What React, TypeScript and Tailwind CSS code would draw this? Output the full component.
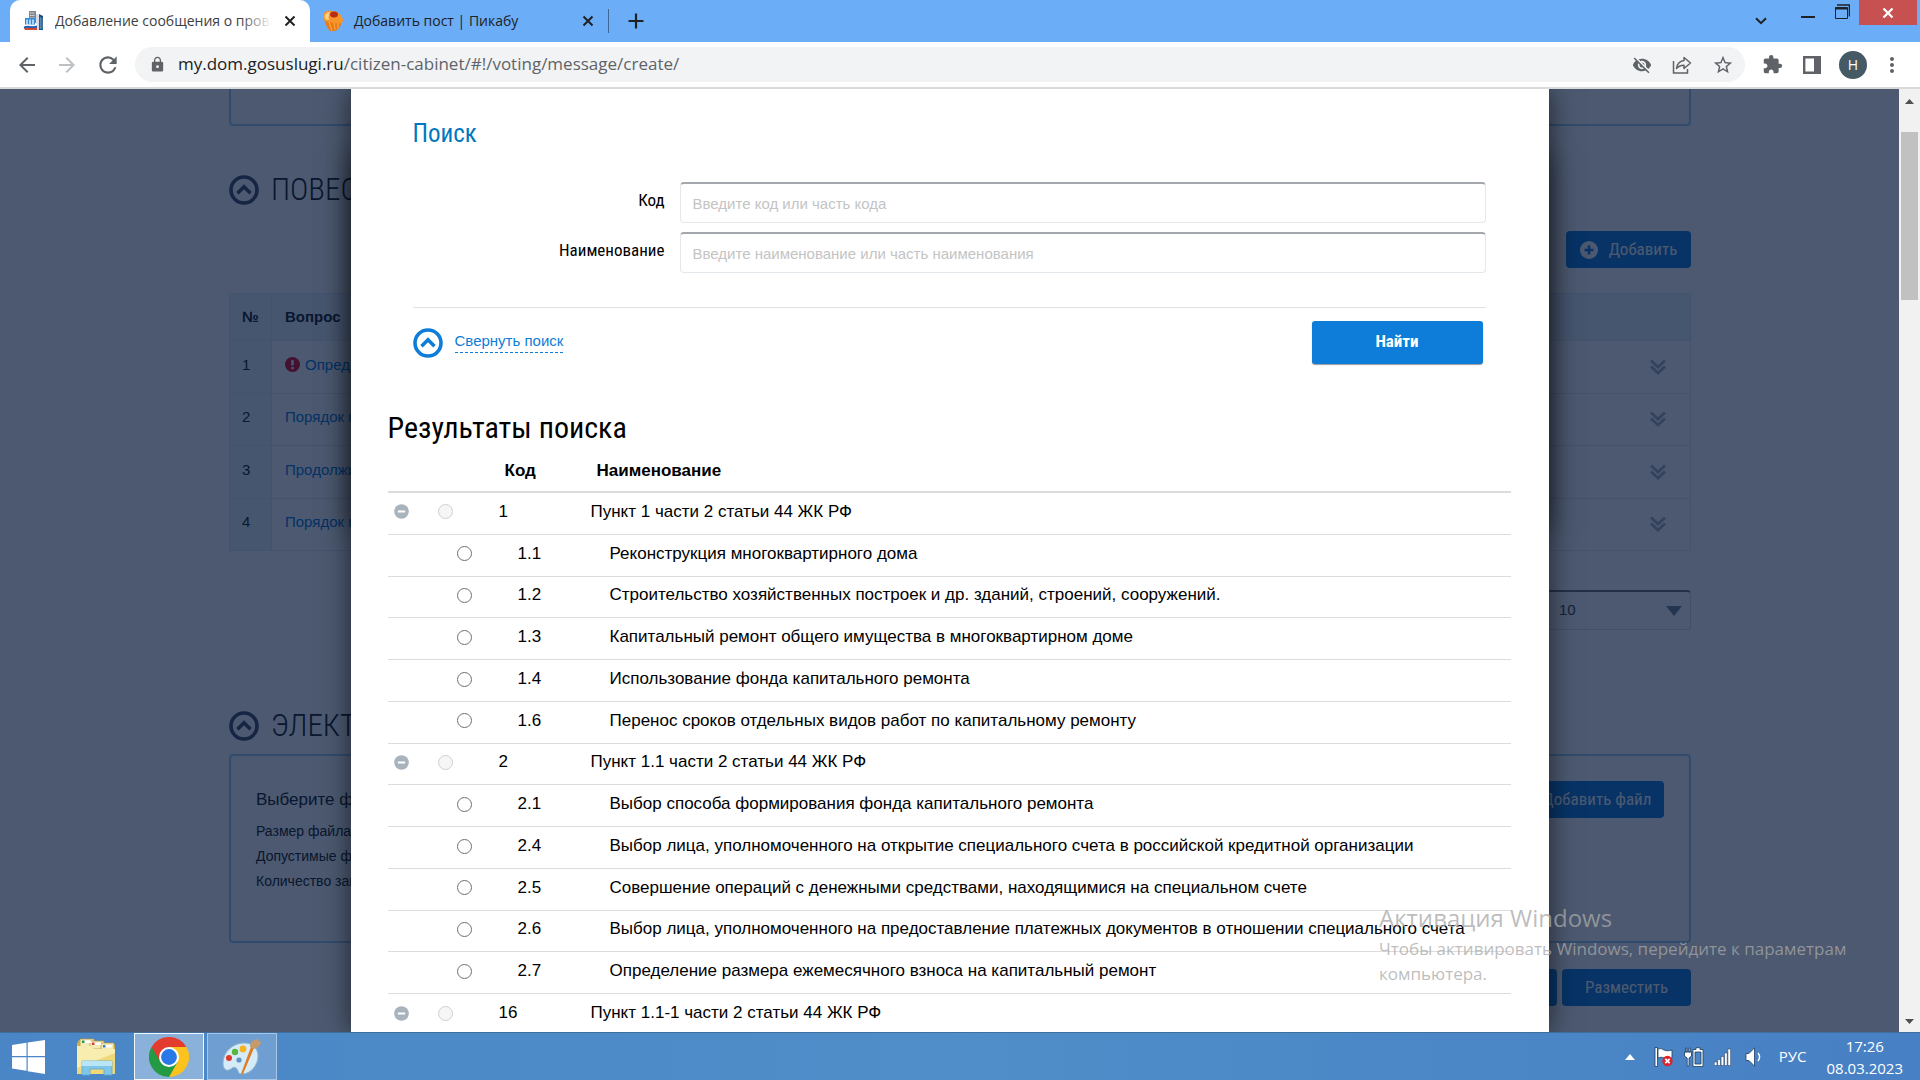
import React from 'react';
import {
  MdArrowBack,
  MdArrowForward,
  MdExtension,
  MdLock,
  MdMoreVert,
  MdRefresh,
  MdStarBorder,
  MdVisibilityOff,
} from 'react-icons/md';

interface ResultRow {
  code: string;
  name: string;
  group?: boolean;
}

const results: ResultRow[] = [
  { code: '1', name: 'Пункт 1 части 2 статьи 44 ЖК РФ', group: true },
  { code: '1.1', name: 'Реконструкция многоквартирного дома' },
  { code: '1.2', name: 'Строительство хозяйственных построек и др. зданий, строений, сооружений.' },
  { code: '1.3', name: 'Капитальный ремонт общего имущества в многоквартирном доме' },
  { code: '1.4', name: 'Использование фонда капитального ремонта' },
  { code: '1.6', name: 'Перенос сроков отдельных видов работ по капитальному ремонту' },
  { code: '2', name: 'Пункт 1.1 части 2 статьи 44 ЖК РФ', group: true },
  { code: '2.1', name: 'Выбор способа формирования фонда капитального ремонта' },
  { code: '2.4', name: 'Выбор лица, уполномоченного на открытие специального счета в российской кредитной организации' },
  { code: '2.5', name: 'Совершение операций с денежными средствами, находящимися на специальном счете' },
  { code: '2.6', name: 'Выбор лица, уполномоченного на предоставление платежных документов в отношении специального счета' },
  { code: '2.7', name: 'Определение размера ежемесячного взноса на капитальный ремонт' },
  { code: '16', name: 'Пункт 1.1-1 части 2 статьи 44 ЖК РФ', group: true },
];

const questions = [
  { id: 1, title: 'Определение', error: true },
  { id: 2, title: 'Порядок приема' },
  { id: 3, title: 'Продолжительность' },
  { id: 4, title: 'Порядок приема' },
];

const condensed = "font-['Roboto_Condensed','Liberation_Sans_Narrow',Roboto,sans-serif]";

/* ---------- Icons ---------- */

const CircleUp: React.FC<{ className?: string }> = ({ className }) => (
  <svg viewBox="0 0 30 30" className={`size-[30px] shrink-0 ${className ?? ''}`} fill="none" stroke="currentColor">
    <circle cx="15" cy="15" r="13" strokeWidth="3.6" />
    <path d="M8.5 18.2 15 11.8l6.500 6.400" strokeWidth="3.600" />
  </svg>
);

const CloseIcon = () => (
  <svg viewBox="0 0 12 12" className="size-3" stroke="currentColor" strokeWidth="2">
    <path d="M1.500 1.500l9 9M10.500 1.500l-9 9" />
  </svg>
);

const DoubleDown = () => (
  <svg viewBox="0 0 16 16" className="inline size-4" fill="none" stroke="currentColor" strokeWidth="2.800">
    <path d="M1 1.500l7 6.500 7-6.500M1 7.500l7 6.500 7-6.500" />
  </svg>
);

const MinusCircle = () => (
  <svg viewBox="0 0 15 15" className="block size-[15px]">
    <circle cx="7.500" cy="7.500" r="7.300" fill="#a9b3bc" />
    <rect x="3.800" y="6.500" width="7.400" height="2" rx=".5" fill="#fff" />
  </svg>
);

const PlusCircle = () => (
  <svg viewBox="0 0 18 18" className="size-[18px] shrink-0">
    <circle cx="9" cy="9" r="9" fill="#fff" />
    <path d="M9 4.500v9M4.500 9h9" stroke="#1a80dc" strokeWidth="2.600" />
  </svg>
);

const HouseFavicon = () => (
  <svg viewBox="0 0 20 20" className="size-5 shrink-0">
    <path d="M5 0h7v12H5z" fill="#7f858c" />
    <path d="M6 2h5M6 4.500h5M6 7h5" stroke="#e8eaec" strokeWidth="1.200" strokeDasharray="1.500 .8" />
    <path d="M12 3l4 1v15h-4z" fill="#d7dde3" />
    <path d="M15 3l4 2v14h-4z" fill="#1c4f80" />
    <path d="M16.300 6v12M18 7v11" stroke="#9fc3e4" strokeWidth=".6" />
    <path d="M1 7h10v9H1z" fill="#2f8ad8" />
    <path d="M3 8.500v5M6 8.500v5M9 8.500v5" stroke="#e4f0fa" strokeWidth="1.400" />
    <path d="M0 14c4-2 8 1 13-1v3c-5 2-9-1-13 1z" fill="#fff" />
    <path d="M0 17c4-3 8 0 13-2v4H1z" fill="#d8482c" />
    <path d="M0 15.500c4-2 8 1 13-1v2c-5 2-9-1-13 1z" fill="#1f5fc0" />
  </svg>
);

const PieFavicon = () => (
  <svg viewBox="0 0 22 22" className="size-[22px] shrink-0">
    <path d="M2 8c1 5 3 10 6 13 4 1 8-1 10-4 1-3 2-6 2-9z" fill="#e97a17" />
    <path d="M7 12l3 9M12 12l1 8M16 11l0 8" stroke="#f9a23a" strokeWidth="1.300" />
    <path d="M1 6c0-4 4-6 9-5 6 0 10 4 11 9 0 3-2 4-5 3-3 1-6 0-8-1C4 13 1 10 1 6z" fill="#f7952a" />
    <path d="M3 5c1-2 3-3 5-3-1 3-2 5-1 8-3 0-5-2-4-5z" fill="#ffd08a" />
    <ellipse cx="12" cy="4.500" rx="4" ry="3" fill="#b92c14" />
  </svg>
);

const ShareIcon = () => (
  <svg viewBox="0 0 20 20" className="size-5" fill="none" stroke="currentColor" strokeWidth="1.500">
    <path d="M1.500 6v12h14v-4" />
    <path d="M12 2.500l6.500 5.500-6.500 5.500v-3.200c-3.500 0-5.500 1-7.500 3.200.5-4 3-7.300 7.500-8z" strokeLinejoin="round" />
  </svg>
);

const ExplorerIcon = () => (
  <svg viewBox="0 0 42 38" className="h-[38px] w-[42px]">
    <path d="M3 2h15l2 3h15l4 2v28H1V6z" fill="#d9b64d" />
    <path d="M4 1h14v8H4z" fill="#f5e9b4" stroke="#b9943a" strokeWidth=".7" />
    <path d="M14 3h14v8H14z" fill="#f5e9b4" stroke="#b9943a" strokeWidth=".7" />
    <path d="M25 5h13v8H25z" fill="#f5e9b4" stroke="#b9943a" strokeWidth=".7" />
    <path d="M6 2.500h9v2.500H6zM16 4.500h9v2.500h-9zM27 7h9v2.500h-9z" fill="#fff" />
    <path d="M6 2.500h2.500v2.500H6z" fill="#2f9c48" />
    <path d="M16 4.500h2.500v2.500H16z" fill="#d6452e" />
    <path d="M27 7h2.500v2.500H27z" fill="#2c86d6" />
    <path d="M1 8h14l3 3h21v25H1z" fill="#f0d878" />
    <path d="M1 8h14l3 3h21v4L1 30z" fill="#f9ecaf" />
    <path d="M6 23h30v14h-8v-6H14v6H6z" fill="#7fc6e8" stroke="#5ba9cf" strokeWidth=".8" />
    <path d="M6 23h30v5H6z" fill="#b9e6f6" />
  </svg>
);

const ChromeLogo = () => (
  <svg viewBox="0 0 48 48" className="size-10">
    <path d="M24 24 3.200 12A24 24 0 0 1 44.800 12z" fill="#e33b2e" />
    <path d="M24 24V12h20.800A24 24 0 0 1 24 48z" fill="#fcc31e" />
    <path d="M24 24l10.400 6L24 48A24 24 0 0 1 3.200 12z" fill="#249a44" />
    <path d="M24 12h20.800L34.400 30z" fill="#fcc31e" />
    <path d="M3.200 12 13.600 30 24 12z" fill="#e33b2e" />
    <path d="M3.200 12 13.600 30 24 36 20 46z" fill="#249a44" />
    <circle cx="24" cy="24" r="12" fill="#fff" />
    <circle cx="24" cy="24" r="9.500" fill="#2878e8" />
  </svg>
);

const PaintIcon = () => (
  <svg viewBox="0 0 40 38" className="h-[38px] w-10">
    <path
      d="M22 5C11 5 1 14 1 25c0 6 3 8 6 7s4-4 7-2 1 6 6 6c9 0 16-9 16-18 0-8-6-13-14-13z"
      fill="#d5ebf7"
      stroke="#8bb6d2"
    />
    <circle cx="17" cy="22" r="2.600" fill="#5f93c4" />
    <circle cx="7" cy="20" r="3" fill="#e0392b" />
    <circle cx="13" cy="14" r="3.200" fill="#55b83a" />
    <circle cx="21" cy="11" r="3.400" fill="#f7b21c" />
    <path d="M32 10 21 36l-2 1 .5-2.500L29 9z" fill="#e07b22" />
    <path d="M28 9c0-4 3-8 8-8 0 3 4 2 3 4-2 4-5 6-8 6z" fill="#c69a6b" />
  </svg>
);

/* ---------- Browser chrome ---------- */

const TabStrip = () => (
  <div className="flex h-[42px] shrink-0 items-stretch bg-[#6badf6] text-[#202124]">
    <div className="ml-[10px] flex w-[300px] items-center rounded-t-[10px] bg-white px-[14px]">
      <HouseFavicon />
      <button className="relative ml-[11px] flex-1 overflow-hidden pb-[2px] text-left text-[14px] whitespace-nowrap text-[#3c4043]">
        Добавление сообщения о проведении
        <span className="absolute inset-y-0 right-0 w-8 bg-linear-to-r from-white/0 to-white" />
      </button>
      <button aria-label="Закрыть вкладку" className="ml-[12px]"><CloseIcon /></button>
    </div>
    <div className="flex w-[298px] items-center pl-[12px] pr-[14px]">
      <PieFavicon />
      <button className="ml-[10px] flex-1 pb-[2px] text-left text-[14px] whitespace-nowrap">Добавить пост | Пикабу</button>
      <button aria-label="Закрыть вкладку"><CloseIcon /></button>
    </div>
    <div className="my-[9px] w-px bg-[#3d6796]" />
    <button aria-label="Новая вкладка" className="ml-[19px]">
      <svg viewBox="0 0 16 16" className="size-4" stroke="currentColor" strokeWidth="2.200">
        <path d="M8 .5v15M.5 8h15" />
      </svg>
    </button>
    {/* Window controls */}
    <div className="ml-auto flex items-start pr-[3px]">
      <button aria-label="Поиск вкладок" className="mt-[17px] mr-[34px]">
        <svg viewBox="0 0 12 8" className="h-2 w-3" fill="none" stroke="currentColor" strokeWidth="2">
          <path d="M1 1.200l5 5 5-5" />
        </svg>
      </button>
      <button aria-label="Свернуть" className="mt-4 mr-5 h-[2px] w-[14px] bg-[#202124]" />
      <button aria-label="Восстановить" className="mt-1 mr-[9px]">
        <svg viewBox="0 0 15 15" className="size-[15px]" fill="none" stroke="currentColor">
          <path d="M.5 3.500h12v11H.5z" />
          <path d="M.5 4.500h12" strokeWidth="2" />
          <path d="M2 1h12.500v11.500" strokeWidth="1.600" />
        </svg>
      </button>
      <button aria-label="Закрыть" className="flex h-[25px] w-[58px] items-center justify-center bg-[#c75050] text-white">
        <svg viewBox="0 0 12 10" className="h-[10px] w-3" stroke="currentColor" strokeWidth="2.200">
          <path d="M1.500.5l9 9M10.500.5l-9 9" />
        </svg>
      </button>
    </div>
  </div>
);

const Toolbar = () => (
  <div className="flex h-[47px] shrink-0 items-center border-b-2 border-[#d9dadb] bg-white pl-[15px] pr-5 text-[#5f6368]">
    <button aria-label="Назад"><MdArrowBack size={24} /></button>
    <button aria-label="Вперед" className="ml-4 text-[#bdc1c6]"><MdArrowForward size={24} /></button>
    <button aria-label="Обновить" className="ml-4"><MdRefresh size={26} /></button>
    <div className="ml-[14px] flex h-[35px] flex-1 items-center rounded-full bg-[#f1f3f4] pl-[14px] pr-[11px]">
      <MdLock size={17} />
      <div className="ml-[12px] flex-1 pb-px text-[17px]">
        <span className="text-[#202124]">my.dom.gosuslugi.ru</span>/citizen-cabinet/#!/voting/message/create/
      </div>
      <div className="flex items-center gap-5">
        <MdVisibilityOff size={20} />
        <ShareIcon />
        <MdStarBorder size={22} />
      </div>
    </div>
    <div className="ml-[17px] flex items-center">
      <MdExtension size={21} />
      <svg viewBox="0 0 18 18" className="ml-[20px] size-[18px]">
        <path d="M1.200 1.200h15.600v15.600H1.200z" fill="none" stroke="currentColor" strokeWidth="2.400" />
        <path d="M11 1h6v16h-6z" fill="currentColor" />
      </svg>
      <span className="ml-[18px] flex size-7 items-center justify-center rounded-full bg-[#455a64] text-[14px] text-white">Н</span>
      <MdMoreVert size={24} className="ml-[13px] -mr-[4px]" />
    </div>
  </div>
);

/* ---------- Page under the dialog ---------- */

const pageButton = `flex h-[37px] items-center justify-center rounded-[4px] bg-[#1a80dc] text-[17px] text-white ${condensed}`;

const SectionTitle: React.FC<{ children: React.ReactNode }> = ({ children }) => (
  <h2 className={`flex h-[30px] items-center gap-3 text-[31px] font-light whitespace-nowrap text-[#222] ${condensed}`}>
    <CircleUp className="text-[#46506a]" />
    {children}
  </h2>
);

const CabinetPage = () => (
  <div className="absolute inset-0 overflow-hidden bg-white">
    <div className="mx-auto max-w-[1462px]">
      <div className="h-[37px] rounded-b-[4px] border-2 border-t-0 border-[#a9d0f0]" />

      <div className="mt-[49px]"><SectionTitle>ПОВЕСТКА ДНЯ</SectionTitle></div>
      <div className="mt-[26px] flex justify-end">
        <button className={`${pageButton} w-[125px] gap-[11px]`}><PlusCircle />Добавить</button>
      </div>

      <table className="mt-[25px] h-[258px] w-full border-collapse border border-[#e0ebf5] text-left text-[15px] text-[#222]">
        <thead>
          <tr className="h-[47px] bg-[#eef6fa]">
            <th className="w-[42px] border-r border-[#e0ebf5] pl-3">№</th>
            <th className="pl-[13px]">Вопрос</th>
            <th />
          </tr>
        </thead>
        <tbody>
          {questions.map((q) => (
            <tr key={q.id} className="border-t border-[#e0ebf5]">
              <td className="border-r border-[#e0ebf5] bg-[#eef6fa] pr-4 pb-1 pl-3">{q.id}</td>
              <td className="pb-1 pl-[13px]">
                <a href="#" className="flex items-center gap-[5px] text-[#0d7dd9]">
                  {q.error && (
                    <svg viewBox="0 0 15 15" className="size-[15px]">
                      <circle cx="7.500" cy="7.500" r="7.500" fill="#e0102e" />
                      <path d="M7.500 3v5.500M7.500 10v2.200" stroke="#fff" strokeWidth="2.400" />
                    </svg>
                  )}
                  {q.title}
                </a>
              </td>
              <td className="w-[64px] pr-6 pb-[2px] text-right text-[#aab6c2]"><DoubleDown /></td>
            </tr>
          ))}
        </tbody>
      </table>

      <div className="mt-[39px] flex justify-end">
        <div className="relative">
          <select
            aria-label="Записей на странице"
            className="h-10 w-[145px] appearance-none rounded-[4px] border border-t-2 border-[#d8e0e8] border-t-[#777] bg-white pl-3 text-[15px] text-[#444]"
          >
            <option>10</option>
          </select>
          <svg viewBox="0 0 16 10" className="pointer-events-none absolute top-4 right-[9px] h-[10px] w-4">
            <path d="M0 0h16L8 10z" fill="#7b8798" />
          </svg>
        </div>
      </div>

      <div className="mt-[81px]"><SectionTitle>ЭЛЕКТРОННЫЕ ОБРАЗЫ</SectionTitle></div>
      <div className="mt-[13px] flex h-[189px] justify-between rounded-[4px] border-2 border-[#a9d0f0] pt-[25px] pr-[25px] pl-[25px] text-[#222]">
        <div>
          <p className="text-[17px] leading-[38px]">Выберите файл</p>
          <p className="text-[14px] leading-[25px]">Размер файла не более</p>
          <p className="text-[14px] leading-[25px]">Допустимые форматы</p>
          <p className="text-[14px] leading-[25px]">Количество загружаемых</p>
        </div>
        <button className={`${pageButton} w-[150px] pl-4`}>Добавить файл</button>
      </div>

      <div className="mt-[26px] flex justify-end gap-[5px]">
        <button className={`${pageButton} w-[125px]`}>Сохранить</button>
        <button className={`${pageButton} w-[129px]`}>Разместить</button>
      </div>
    </div>
  </div>
);

/* ---------- Search dialog ---------- */

const SearchField: React.FC<{ id: string; label: string; placeholder: string }> = ({ id, label, placeholder }) => (
  <div className="flex h-[41px] items-center justify-end gap-[15px]">
    <label htmlFor={id} className={`pb-[3px] text-[17px] ${condensed}`}>{label}</label>
    <input
      id={id}
      type="text"
      placeholder={placeholder}
      className="h-full w-[806px] rounded-[4px] border border-t-2 border-[#e3e8ec] border-t-[#a3a6aa] pl-3 text-[15px] placeholder:text-[#c4c4c4]"
    />
  </div>
);

const SearchDialog = () => (
  <div role="dialog" className="relative w-[1198px] shadow-[0_0_26px_rgba(0,0,0,0.6)]">
    <div className="absolute inset-x-0 top-[65px] h-[375px] shadow-[0_0_26px_rgba(0,0,0,0.5)]" />
    <div className="relative h-full bg-white pt-[29px] pr-[38px] pl-[37px]">
      <div className="px-[25px]">
        <h2 className={`text-[25px] leading-8 text-[#0077c0] ${condensed}`}>Поиск</h2>
        <form className="mt-8">
          <div className="flex flex-col gap-[9px]">
            <SearchField id="code" label="Код" placeholder="Введите код или часть кода" />
            <SearchField id="name" label="Наименование" placeholder="Введите наименование или часть наименования" />
          </div>
          <div className="mt-[34px] flex items-center border-t border-[#dfe1e3] pt-[13px] pr-[3px]">
            <CircleUp className="text-[#0d7dd9]" />
            <a href="#" className="mb-[2px] ml-3 border-b border-dashed border-[#0d7dd9] text-[15px] leading-[22px] text-[#0d7dd9]">
              Свернуть поиск
            </a>
            <button
              type="button"
              className={`ml-auto h-[43px] w-[171px] rounded-[3px] bg-[#0d7dd9] pb-[2px] text-[17px] font-bold text-white shadow-[0_1px_1px_rgba(0,0,0,0.4)] ${condensed}`}
            >
              Найти
            </button>
          </div>
        </form>
      </div>

      <h1 className={`mt-[44px] text-[30px] leading-10 ${condensed}`}>Результаты поиска</h1>
      <table className="h-[588px] w-full table-fixed border-collapse text-left text-[17px]">
        <colgroup>
          <col className="w-[41px]" />
          <col className="w-[62px]" />
          <col className="w-[92px]" />
          <col />
        </colgroup>
        <thead>
          <tr className="h-11 border-b-2 border-[#dcdcdc]">
            <th />
            <th />
            <th className="pt-[3px] pl-[14px]">Код</th>
            <th className="pt-[3px] pl-[14px]">Наименование</th>
          </tr>
        </thead>
        <tbody>
          {results.map((r) => (
            <tr key={r.code} className="border-b border-[#dcdcdc]">
              <td className="pb-[3px] pl-[6px]">
                {r.group && <button aria-label="Свернуть группу" className="block"><MinusCircle /></button>}
              </td>
              <td className={r.group ? 'pb-[3px] pl-[9px]' : 'pb-[3px] pl-7'}>
                <input
                  type="radio"
                  name="result"
                  aria-label={r.code}
                  disabled={r.group}
                  className="block size-[15px] appearance-none rounded-full border border-[#707070] bg-white disabled:border-[#cfcfcf] disabled:bg-[#f6f6f6]"
                />
              </td>
              <td className={r.group ? 'pb-1 pl-2' : 'pb-1 pl-[27px]'}>{r.code}</td>
              <td className={r.group ? 'pb-1 pl-2 whitespace-nowrap' : 'pb-1 pl-[27px] whitespace-nowrap'}>{r.name}</td>
            </tr>
          ))}
        </tbody>
      </table>
    </div>
  </div>
);

const ScrollBar = () => (
  <div className="relative flex w-[21px] shrink-0 flex-col items-center bg-[#f1f1f1] pt-[10px] pb-[8px]">
    <svg viewBox="0 0 9 5" className="h-[5px] w-[9px]"><path d="M0 5h9L4.500 0z" fill="#505050" /></svg>
    <div className="mt-7 h-[168px] w-[17px] bg-[#c1c1c1]" />
    <svg viewBox="0 0 9 5" className="mt-auto h-[5px] w-[9px]"><path d="M0 0h9L4.500 5z" fill="#505050" /></svg>
  </div>
);

/* ---------- Desktop ---------- */

const Taskbar = () => (
  <div className="flex h-12 shrink-0 items-center border-t border-[#3f6f9f] bg-linear-to-r from-[#4a86c6] via-[#4f8ec9] to-[#4780c4] text-white">
    <button aria-label="Пуск" className="ml-3">
      <svg viewBox="0 0 33 34" className="h-[34px] w-[33px]" fill="#fff">
        <path d="M0 5l14.500-2.200V16H0zM15.700 2.600 33 0v16H15.700zM0 17.200h14.500v13.500L0 28.500zM15.700 17.200H33V34l-17.300-2.800z" />
      </svg>
    </button>
    <button aria-label="Проводник" className="ml-[31px]"><ExplorerIcon /></button>
    <button aria-label="Google Chrome" className="ml-4 flex h-[47px] w-[70px] items-center justify-center border border-white/90 bg-white/35">
      <ChromeLogo />
    </button>
    <button aria-label="Paint" className="ml-[3px] flex h-[47px] w-[70px] items-center justify-center border border-white/40 bg-white/20">
      <PaintIcon />
    </button>

    {/* System tray */}
    <div className="ml-auto flex items-center pr-[17px] text-[15px]">
      <svg viewBox="0 0 10 6" className="h-[6px] w-[10px]"><path d="M0 6h10L5 0z" fill="#fff" /></svg>
      <svg viewBox="0 0 20 20" className="ml-[19px] size-5">
        <path d="M1 .5h2.500v19H1z" fill="#fff" stroke="#1d3d60" strokeWidth=".8" />
        <path d="M4 2c3-1 4 0 6 1s5 1 8 0v8c-3 1-6 1-8 0s-3-1-6 0z" fill="#fff" stroke="#1d3d60" strokeWidth=".8" />
        <circle cx="13.500" cy="14" r="5.200" fill="#d8262c" />
        <path d="M11.300 11.800l4.400 4.400M15.700 11.800l-4.400 4.400" stroke="#fff" strokeWidth="1.700" />
      </svg>
      <svg viewBox="0 0 20 20" className="ml-[10px] size-5" stroke="#1d3d60" strokeWidth=".8">
        <path d="M1.500 1h1.300v4H1.500zM5 1h1.300v4H5zM.5 5h7v4l-2.500 2v8H3.200v-8L.5 9z" fill="#fff" />
        <path d="M9 2.500h3V.7h4v1.800h3v17H9z" fill="#fff" />
        <path d="M11 5h6v12h-6z" fill="#4a86c6" />
      </svg>
      <svg viewBox="0 0 17 18" className="ml-[10px] h-[18px] w-[17px]" fill="#fff" stroke="#1d3d60" strokeWidth=".5">
        <path d="M.3 14h2.700v3.500H.3zM3.700 11.500h2.700v6H3.700zM7.100 8.500h2.700v9H7.100zM10.500 5h2.700v12.500h-2.700zM13.900 1h2.700v16.500h-2.700z" />
      </svg>
      <svg viewBox="0 0 18 20" className="ml-[14px] h-5 w-[18px]" stroke="#1d3d60" strokeWidth=".8">
        <path d="M1 6.500h3L9.500.8v18.400L4 13.500H1z" fill="#fff" />
        <path d="M13 6c2 2.500 2 5.500 0 8" fill="none" stroke="#fff" strokeWidth="1.400" />
      </svg>
      <span className="ml-[16px]">РУС</span>
      <span className="ml-5 flex flex-col items-center leading-[22px]">
        <span>17:26</span>
        <span>08.03.2023</span>
      </span>
    </div>
  </div>
);

const App: React.FC = () => {
  return (
    <div className="flex h-screen flex-col overflow-hidden font-['Open_Sans','Noto_Sans',sans-serif]">
      <TabStrip />
      <Toolbar />
      <main className="relative flex flex-1 overflow-hidden font-['Liberation_Sans',Arial,sans-serif]">
        <CabinetPage />
        <div className="relative flex flex-1 justify-center overflow-hidden bg-[rgba(0,18,51,0.7)]">
          <SearchDialog />
        </div>
        <ScrollBar />
        {/* Activation notice sits on top of every window */}
        <div className="pointer-events-none absolute right-[66px] bottom-[46px] w-[475px] font-['Open_Sans','Noto_Sans',sans-serif] text-[#a8a8a8]/75">
          <p className="mb-[2px] text-[24px] leading-8">Активация Windows</p>
          <p className="text-[17px] leading-[25px]">Чтобы активировать Windows, перейдите к параметрам компьютера.</p>
        </div>
      </main>
      <Taskbar />
    </div>
  );
};

export default App;
